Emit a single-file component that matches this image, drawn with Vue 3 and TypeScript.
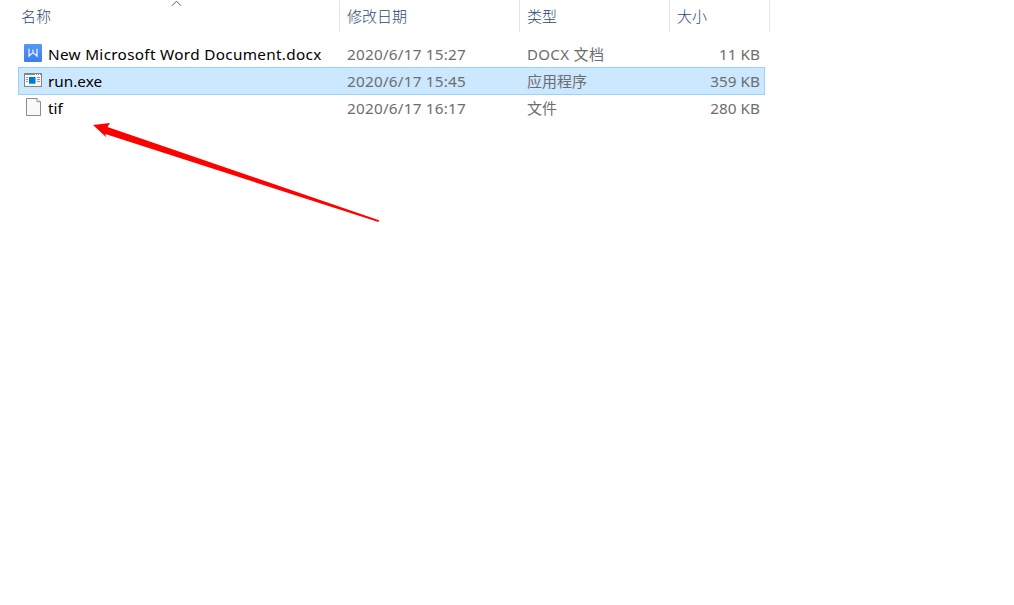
<script setup lang="ts">
interface FileEntry {
  icon: 'word' | 'app' | 'file'
  name: string
  date: string
  type: string
  size: string
  selected?: boolean
}

const columns: string[] = ['名称', '修改日期', '类型', '大小']

const files: FileEntry[] = [
  { icon: 'word', name: 'New Microsoft Word Document.docx', date: '2020/6/17 15:27', type: 'DOCX 文档', size: '11 KB' },
  { icon: 'app', name: 'run.exe', date: '2020/6/17 15:45', type: '应用程序', size: '359 KB', selected: true },
  { icon: 'file', name: 'tif', date: '2020/6/17 16:17', type: '文件', size: '280 KB' },
]
</script>

<template>
  <main class="explorer">
    <header class="header">
      <div v-for="(label, i) in columns" :key="label" class="heading">
        <span>{{ label }}</span>
        <svg v-if="i === 0" class="sort" width="12" height="8" viewBox="0 0 12 8">
          <path d="M1 5.7 5.5 1.2 10 5.7" fill="none" stroke="#5c5c5c" stroke-width="1" />
        </svg>
      </div>
    </header>
    <section class="list">
      <div v-for="file in files" :key="file.name" class="row" :class="[file.icon, { selected: file.selected }]">
        <div class="name">
          <svg v-if="file.icon === 'word'" class="icon" width="20" height="20" viewBox="0 0 20 20">
            <defs>
              <linearGradient id="wordFill" x1="0" y1="0" x2="0" y2="1">
                <stop offset="0" stop-color="#5597f6" />
                <stop offset="1" stop-color="#3c7eee" />
              </linearGradient>
            </defs>
            <rect x="1" y="1" width="18" height="18" rx="1.3" fill="url(#wordFill)" />
            <path d="M6 5.8V13L10 9.6 14 13V5.8M10 6.6V9.6" fill="none" stroke="#e8f1ff" stroke-width="1.3" />
          </svg>
          <svg v-else-if="file.icon === 'app'" class="icon" width="20" height="20" viewBox="0 0 20 20">
            <rect x="1.5" y="3.5" width="17" height="13" fill="#f6f6f6" stroke="#858585" />
            <path d="M1 4H19" stroke="#858585" stroke-width="2" />
            <path d="M12 4.5H13M14 4.5H15M16 4.5H17" stroke="#fff" />
            <path d="M3 7.5H5M3 9.5H5M3 11.5H5M14 7.5H17M14 9.5H17M14 11.5H17" stroke="#999" />
            <rect x="6" y="7" width="6.5" height="6.7" fill="#0078d7" />
          </svg>
          <svg v-else class="icon" width="20" height="20" viewBox="0 0 20 20">
            <path d="M3.5 1.5H14L17.5 5V18.5H3.5Z" fill="#f9f9f9" stroke="#8b8b8b" />
            <path d="M14 1.5V4.7H17.5" fill="#fff" stroke="#8b8b8b" />
          </svg>
          <span>{{ file.name }}</span>
        </div>
        <div class="date">{{ file.date }}</div>
        <div class="type">{{ file.type }}</div>
        <div class="size">{{ file.size }}</div>
      </div>
    </section>
    <svg class="arrow" width="290" height="102" viewBox="0 0 290 102">
      <path d="M0 5 17 3 14.5 7 286 100.3 285.5 102 12.3 14 13.3 17.3Z" fill="#f00" />
    </svg>
  </main>
</template>

<style>
body {
  margin: 0;
  background: #fff;
}
</style>

<style scoped>
.explorer {
  position: relative;
  box-sizing: border-box;
  width: 100%;
  height: 605px;
  overflow: hidden;
  background: #fff;
  font-family: "Noto Sans", "Noto Sans CJK SC", sans-serif;
  font-size: 15px;
  color: #6d6d6d;
}
.header {
  display: grid;
  grid-template-columns: 340px 180px 150px 100px;
  height: 32px;
  font-family: "Noto Sans CJK SC", sans-serif;
  font-weight: 300;
  color: #2f476e;
}
.heading {
  position: relative;
  box-sizing: border-box;
  padding-left: 7px;
  border-right: 1px solid #e5e5e5;
  line-height: 32px;
}
.heading:first-child {
  padding-left: 21px;
}
.sort {
  position: absolute;
  left: 171px;
  top: 0;
}
.list {
  width: 748px;
  margin: 8px 0 0 18px;
}
.row {
  box-sizing: border-box;
  display: grid;
  grid-template-columns: 328px 180px 150px 83px;
  height: 28px;
  margin-bottom: -1px;
  width: 747px;
  border: 1px solid transparent;
  line-height: 26px;
  white-space: nowrap;
}
.selected {
  border-color: #99d1ff;
  background: #cce8ff;
}
.name {
  display: flex;
  gap: 5px;
  padding-left: 4px;
  font-size: 15.3px;
  color: #000;
}
.word .name {
  letter-spacing: 0.31px;
}
.icon {
  flex: none;
  margin-top: 2px;
}
.date {
  font-size: 15.3px;
  letter-spacing: 0.22px;
}
.word .type {
  letter-spacing: 0.35px;
}
.size {
  font-size: 15.3px;
  text-align: right;
}
.arrow {
  position: absolute;
  left: 93px;
  top: 120px;
}
</style>
